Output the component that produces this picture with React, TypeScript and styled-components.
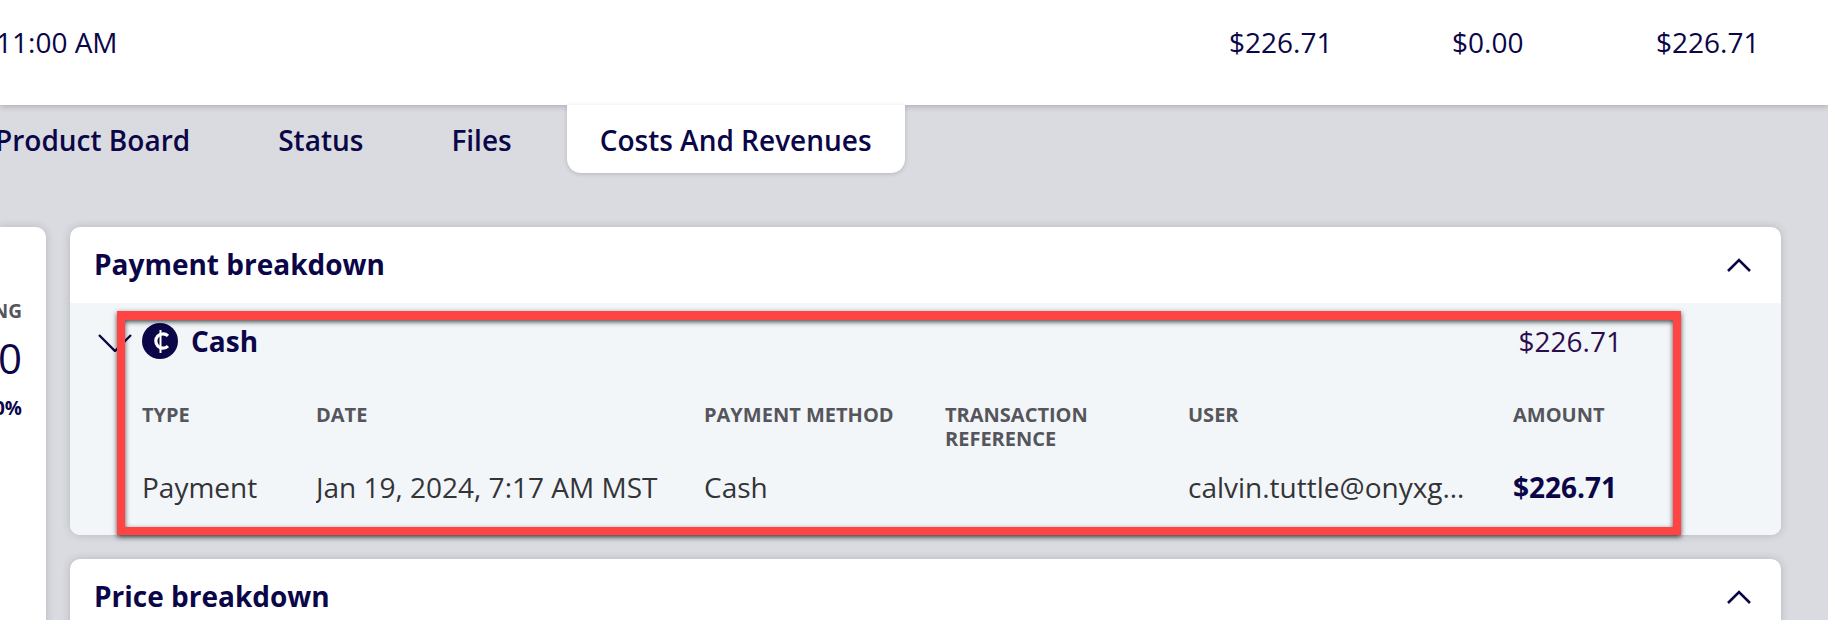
import styled, { createGlobalStyle } from "styled-components";

const GlobalStyle = createGlobalStyle`
  html, body {
    margin: 0;
    padding: 0;
    width: 1828px;
    height: 620px;
    overflow: hidden;
    background-color: #dadbe0;
    font-family: "Open Sans", "Liberation Sans", sans-serif;
    color: #0a0647;
  }
  * {
    box-sizing: border-box;
  }
`;

const Page = styled.div`
  width: 1828px;
  height: 620px;
  overflow: hidden;
`;

const SummaryBar = styled.div`
  display: flex;
  align-items: center;
  height: 105px;
  padding-bottom: 21px;
  background-color: #fff;
  box-shadow: 0 1px 6px rgba(40, 40, 60, 0.3);
  font-size: 28px;
  position: relative;
`;

const SummaryTime = styled.div`
  flex: 1;
  margin-left: -4px;
`;

const SummaryValue = styled.div<{ $width: number }>`
  width: ${(p) => p.$width}px;
`;

const TabBar = styled.div`
  display: flex;
  gap: 22px;
  margin-left: -38px;
  height: 68px;
`;

const Tab = styled.div<{ $active?: boolean }>`
  display: flex;
  align-items: center;
  height: 68px;
  padding: 2px 33px 0;
  font-size: 28px;
  font-weight: 600;
  white-space: nowrap;
  position: relative;
  background-color: ${(p) => (p.$active ? "#fff" : "transparent")};
  border-radius: ${(p) => (p.$active ? "0 0 14px 14px" : "0")};
  box-shadow: ${(p) => (p.$active ? "0 1px 4px rgba(40, 40, 60, 0.2)" : "none")};
`;

const Columns = styled.div`
  display: flex;
  gap: 24px;
  margin-top: 54px;
  padding-right: 47px;
`;

const SideCard = styled.div`
  width: 46px;
  height: 500px;
  flex-shrink: 0;
  padding: 72px 24px 0 0;
  display: flex;
  flex-direction: column;
  align-items: flex-end;
  overflow: hidden;
  background-color: #fff;
  border-radius: 0 10px 0 0;
  box-shadow: 0 0 8px rgba(40, 40, 60, 0.2);
`;

const SideLabel = styled.div`
  font-size: 19px;
  font-weight: 700;
  line-height: 24px;
  color: #55565c;
  white-space: nowrap;
`;

const SideValue = styled.div`
  font-size: 42px;
  line-height: 62px;
  margin-top: 4px;
  white-space: nowrap;
`;

const SidePercent = styled.div`
  font-size: 19px;
  font-weight: 700;
  line-height: 24px;
  margin-top: 7px;
  white-space: nowrap;
`;

const Stack = styled.div`
  flex: 1;
  display: flex;
  flex-direction: column;
  gap: 24px;
`;

const Card = styled.section`
  position: relative;
  background-color: #fff;
  border-radius: 10px;
  box-shadow: 0 0 8px rgba(40, 40, 60, 0.2);
`;

const CardHeader = styled.div`
  display: flex;
  align-items: center;
  justify-content: space-between;
  height: 76px;
  padding: 0 30px 0 24px;
`;

const CardTitle = styled.h2`
  margin: -2px 0 0;
  font-size: 28px;
  font-weight: 700;
  line-height: 36px;
`;

const CardBody = styled.div`
  height: 232px;
  padding: 20px 0 0 28px;
  background-color: #f3f6f9;
  border-radius: 0 0 10px 10px;
`;

const MethodRow = styled.div`
  display: flex;
  align-items: center;
  height: 36px;
  padding-right: 159px;
`;

const Toggle = styled.svg`
  width: 34px;
  height: 18px;
  margin: 3px 10px 0 0;
  flex-shrink: 0;
`;

const MethodName = styled.div`
  flex: 1;
  margin-left: 13px;
  font-size: 28px;
  font-weight: 700;
`;

const MethodTotal = styled.div`
  font-size: 28px;
  color: #2b0d4d;
`;

const Table = styled.div`
  display: grid;
  grid-template-columns: 174px 388px 241px 243px 325px 1fr;
  margin: 44px 0 0 44px;
`;

const HeadCell = styled.div`
  height: 65px;
  font-size: 20px;
  font-weight: 700;
  line-height: 24px;
  text-transform: uppercase;
  color: #55565c;
  padding-right: 24px;
`;

const Cell = styled.div<{ $strong?: boolean }>`
  font-size: 28px;
  line-height: 38px;
  font-weight: ${(p) => (p.$strong ? 700 : 400)};
  color: ${(p) => (p.$strong ? "#0a0647" : "#333438")};
  white-space: nowrap;
  overflow: hidden;
  text-overflow: ellipsis;
  padding-right: ${(p) => (p.$strong ? 0 : 40)}px;
`;

const Highlight = styled.div`
  position: absolute;
  left: 47px;
  top: 84px;
  width: 1564px;
  height: 224px;
  border: 8px solid #ff4444;
  border-top-width: 9px;
  box-shadow:
    0 2px 5px rgba(0, 0, 0, 0.7),
    inset 0 2px 5px rgba(0, 0, 0, 0.7);
  pointer-events: none;
`;

function ChevronUp() {
  return (
    <svg width="24" height="14" viewBox="0 0 24 14" fill="none">
      <path d="M1 13 L12 2 L23 13" stroke="#0a0647" strokeWidth="2.6" />
    </svg>
  );
}

function CashIcon() {
  return (
    <svg width="36" height="36" viewBox="0 0 36 36" fill="none">
      <circle cx="18" cy="18" r="18" fill="#0a0647" />
      <path
        d="M26 12.8 A7.2 7.2 0 1 0 26 23.2"
        stroke="#fff"
        strokeWidth="3.2"
      />
      <path d="M18.5 7 V30" stroke="#fff" strokeWidth="2" />
    </svg>
  );
}

const heads = [
  "Type",
  "Date",
  "Payment method",
  "Transaction reference",
  "User",
  "Amount",
];

function App() {
  return (
    <Page>
      <GlobalStyle />
      <SummaryBar>
        <SummaryTime>11:00 AM</SummaryTime>
        <SummaryValue $width={223}>$226.71</SummaryValue>
        <SummaryValue $width={204}>$0.00</SummaryValue>
        <SummaryValue $width={172}>$226.71</SummaryValue>
      </SummaryBar>
      <TabBar>
        <Tab>Product Board</Tab>
        <Tab>Status</Tab>
        <Tab>Files</Tab>
        <Tab $active>Costs And Revenues</Tab>
      </TabBar>
      <Columns>
        <SideCard>
          <SideLabel>OUTSTANDING</SideLabel>
          <SideValue>$0.00</SideValue>
          <SidePercent>0.00%</SidePercent>
        </SideCard>
        <Stack>
          <Card>
            <CardHeader>
              <CardTitle>Payment breakdown</CardTitle>
              <ChevronUp />
            </CardHeader>
            <CardBody>
              <MethodRow>
                <Toggle viewBox="0 0 34 18" fill="none">
                  <path d="M1 1 L17 17 L33 1" stroke="#0a0647" strokeWidth="2.4" />
                </Toggle>
                <CashIcon />
                <MethodName>Cash</MethodName>
                <MethodTotal>$226.71</MethodTotal>
              </MethodRow>
              <Table>
                {heads.map((head) => (
                  <HeadCell key={head}>{head}</HeadCell>
                ))}
                <Cell>Payment</Cell>
                <Cell>Jan 19, 2024, 7:17 AM MST</Cell>
                <Cell>Cash</Cell>
                <Cell />
                <Cell>calvin.tuttle@onyxgroup.com</Cell>
                <Cell $strong>$226.71</Cell>
              </Table>
            </CardBody>
            <Highlight />
          </Card>
          <Card>
            <CardHeader>
              <CardTitle>Price breakdown</CardTitle>
              <ChevronUp />
            </CardHeader>
          </Card>
        </Stack>
      </Columns>
    </Page>
  );
}

export default App;
